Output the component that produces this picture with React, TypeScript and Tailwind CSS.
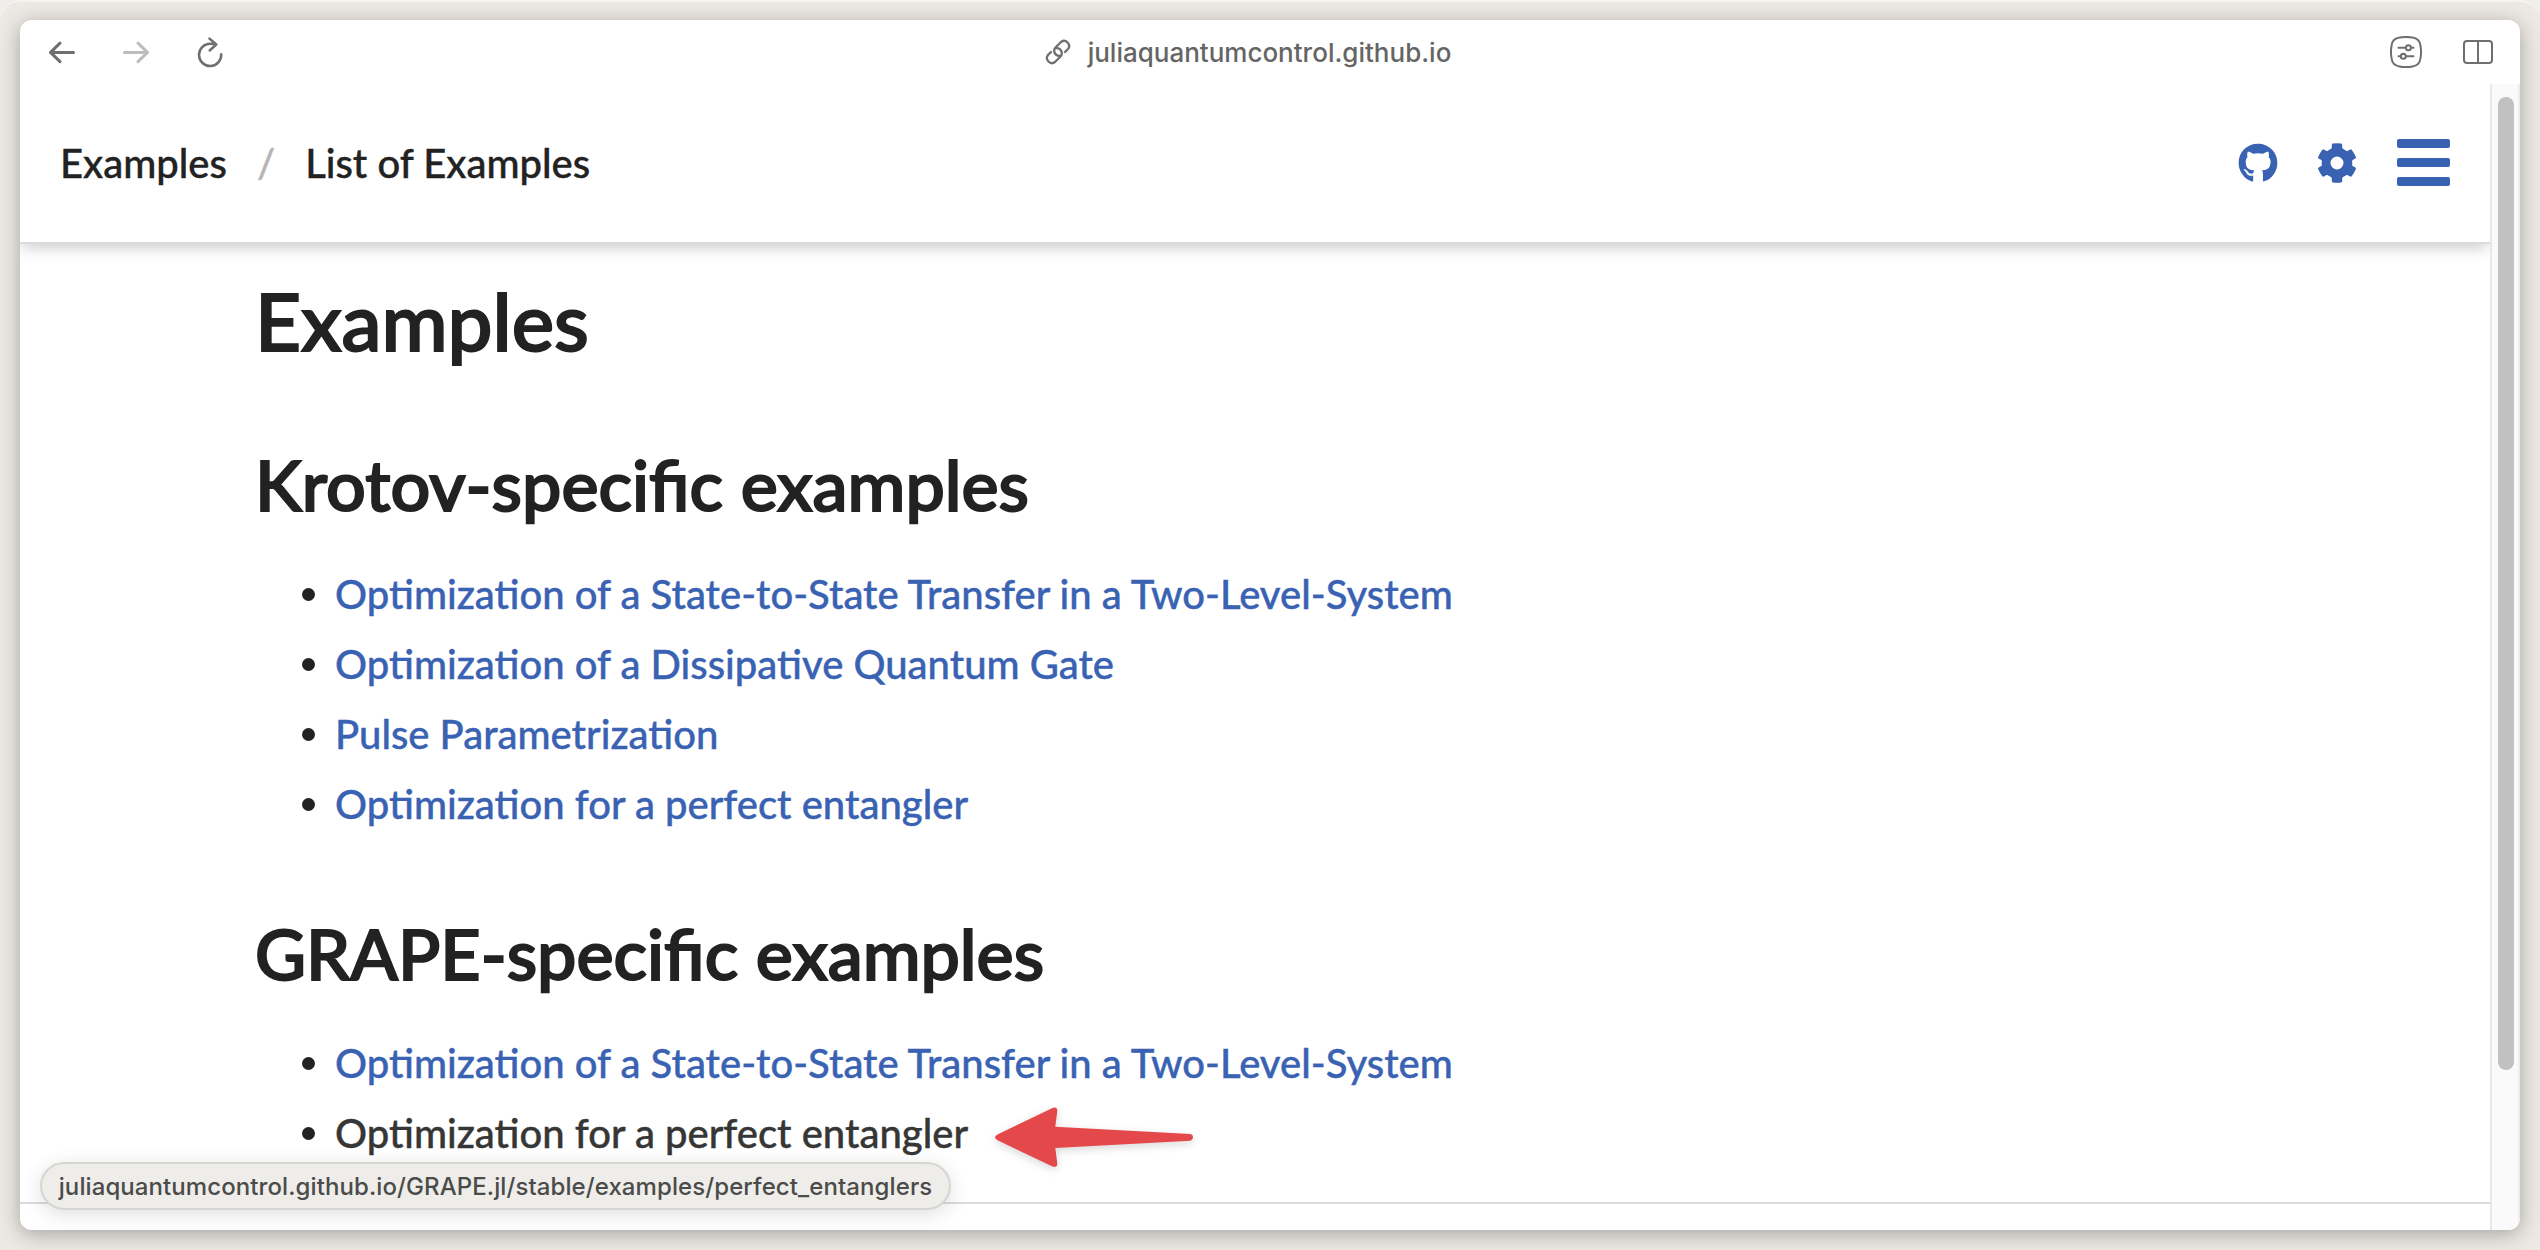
import React from "react";

type Section = { title: string; items: { label: string; hovered?: boolean }[] };

const sections: Section[] = [
  {
    title: "Krotov-specific examples",
    items: [
      { label: "Optimization of a State-to-State Transfer in a Two-Level-System" },
      { label: "Optimization of a Dissipative Quantum Gate" },
      { label: "Pulse Parametrization" },
      { label: "Optimization for a perfect entangler" },
    ],
  },
  {
    title: "GRAPE-specific examples",
    items: [
      { label: "Optimization of a State-to-State Transfer in a Two-Level-System" },
      { label: "Optimization for a perfect entangler", hovered: true },
    ],
  },
];

function BrowserBar() {
  return (
    <div className="flex h-16 shrink-0 items-center pl-7 pr-[27px] text-[#6f6f6f]">
      <div className="flex flex-1 items-center gap-[46px]">
        <svg width="28" height="28" viewBox="0 0 28 28" fill="none" stroke="currentColor" strokeWidth="3" strokeLinecap="round" strokeLinejoin="round">
          <path d="M25.500 14.400H2.500M12 5.200L2.500 14.400l9.500 9.200" />
        </svg>
        <svg className="text-[#bdbdbd]" width="28" height="28" viewBox="0 0 28 28" fill="none" stroke="currentColor" strokeWidth="3" strokeLinecap="round" strokeLinejoin="round">
          <path d="M2.500 14.400h23M16 5.200l9.500 9.200-9.500 9.200" />
        </svg>
        <svg width="28" height="32" viewBox="0 0 28 32" fill="none" stroke="currentColor" strokeWidth="2.500" strokeLinecap="round" strokeLinejoin="round">
          <path d="M25.200 18.200A11.100 11.100 0 1 1 14.100 7.800c2 0 3.800.1 5.400.5M13.500 2.600l6.800 5.900-6.600 6" />
        </svg>
      </div>
      <div className="mr-[46px] flex items-center gap-4">
        <svg width="28" height="28" viewBox="0 0 28 28" fill="none" stroke="currentColor" strokeWidth="2.300" strokeLinecap="round">
          <path d="M7 14L4 17A5 5 0 0 0 11 24L16.300 18.700A5 5 0 0 0 12.800 10.200" />
          <path d="M21 14L24 11A5 5 0 0 0 17 4L11.700 9.300A5 5 0 0 0 15.200 17.800" />
        </svg>
        <span className="pt-px font-['Inter'] text-[26px] font-medium leading-8 text-[#656565]">juliaquantumcontrol.github.io</span>
      </div>
      <div className="flex flex-1 items-center justify-end gap-[41px]">
        <svg width="32" height="32" viewBox="0 0 32 32" fill="none" stroke="currentColor" strokeWidth="2">
          <path d="M9.500 1.600C13 .9 19 .9 22.500 1.600 27.500 2.200 29.800 4.500 30.400 9.500 31.100 13 31.100 19 30.400 22.500 29.800 27.500 27.500 29.800 22.500 30.400 19 31.100 13 31.100 9.500 30.400 4.500 29.800 2.200 27.500 1.600 22.500.9 19 .9 13 1.600 9.500 2.200 4.500 4.500 2.200 9.500 1.600z" />
          <path d="M8.500 11.700h7M21 11.700h2.500M8.500 20.300h2M16 20.300h7.500" strokeLinecap="round" />
          <circle cx="18.400" cy="11.700" r="2.500" />
          <circle cx="13.300" cy="20.300" r="2.500" />
        </svg>
        <svg width="30" height="24" viewBox="0 0 30 24" fill="none" stroke="currentColor" strokeWidth="2">
          <rect x="1" y="1" width="28" height="22" rx="3" />
          <path d="M15 1v22" />
        </svg>
      </div>
    </div>
  );
}

function GearIcon() {
  return (
    <svg width="40" height="40" viewBox="-20 -20 40 40" fill="currentColor">
      <circle r="10.900" fill="none" stroke="currentColor" strokeWidth="8.800" />
      {[0, 60, 120, 180, 240, 300].map((a) => (
        <path key={a} transform={`rotate(${a})`} d="M-4.200-19.400Q0-19.900 4.200-19.400Q5.200-19.200 5.200-18.200L5.300-15L7-12H-7L-5.300-15L-5.200-18.200Q-5.200-19.200-4.200-19.400z" />
      ))}
    </svg>
  );
}

function PageHeader() {
  return (
    <header className="z-10 flex h-40 shrink-0 items-center justify-between border-b-2 border-[#dbdbdb] bg-white pl-10 pr-10 shadow-[0_6px_14px_-2px_rgba(0,0,0,0.2)]">
      <nav className="flex items-center text-[40px] font-medium leading-[60px] text-[#222222] [-webkit-text-stroke:0.4px]">
        <span>Examples</span>
        <span className="px-[30px] text-[#b5b5b5]">/</span>
        <span>List of Examples</span>
      </nav>
      <div className="flex items-center gap-10 pb-px text-[#3a62b3]">
        <svg className="-mr-px" width="40" height="40" viewBox="0 0 496 512" fill="currentColor">
          <path d="M165.900 397.400c0 2-2.300 3.600-5.200 3.600-3.300.3-5.600-1.300-5.600-3.600 0-2 2.300-3.600 5.200-3.600 3-.3 5.600 1.300 5.600 3.600zm-31.100-4.500c-.7 2 1.300 4.300 4.300 4.900 2.600 1 5.600 0 6.200-2s-1.300-4.300-4.300-5.200c-2.600-.7-5.500.3-6.200 2.300zm44.200-1.700c-2.900.7-4.900 2.600-4.600 4.900.3 2 2.900 3.300 5.900 2.600 2.900-.7 4.900-2.600 4.600-4.600-.3-1.900-3-3.200-5.900-2.900zM244.800 8C106.100 8 0 113.300 0 252c0 110.900 69.800 205.800 169.500 239.200 12.800 2.300 17.300-5.600 17.300-12.100 0-6.200-.3-40.400-.3-61.400 0 0-70 15-84.700-29.800 0 0-11.400-29.100-27.800-36.600 0 0-22.900-15.700 1.600-15.400 0 0 24.900 2 38.600 25.800 21.900 38.600 58.600 27.500 72.900 20.900 2.300-16 8.800-27.100 16-33.700-55.900-6.200-112.300-14.300-112.300-110.500 0-27.500 7.600-41.300 23.600-58.900-2.600-6.500-11.100-33.300 2.600-67.900 20.900-6.500 69 27 69 27 20-5.600 41.500-8.500 62.800-8.500s42.800 2.900 62.800 8.500c0 0 48.100-33.600 69-27 13.700 34.700 5.200 61.400 2.600 67.900 16 17.700 25.800 31.500 25.800 58.900 0 96.500-58.900 104.200-114.800 110.500 9.200 7.900 17 22.900 17 46.400 0 33.700-.3 75.400-.3 83.600 0 6.500 4.600 14.400 17.300 12.100C428.200 457.800 496 362.900 496 252 496 113.300 383.500 8 244.800 8z" />
        </svg>
        <GearIcon />
        <div className="flex w-[53px] flex-col gap-[10px]">
          <div className="h-[9px] rounded-[2px] bg-[#3a62b3]" />
          <div className="h-[9px] rounded-[2px] bg-[#3a62b3]" />
          <div className="h-[9px] rounded-[2px] bg-[#3a62b3]" />
        </div>
      </div>
    </header>
  );
}

function RedArrow() {
  return (
    <svg className="absolute left-[calc(100%+27px)] top-1 overflow-visible drop-shadow-[0_3px_4px_rgba(0,0,0,0.15)]" width="198" height="61" viewBox="0 0 198 61">
      <path d="M2.500 27.500L57.500.9Q62.500-.5 62.300 4L60.300 19.700L195.500 27Q198 27.500 198 30.300Q198 33 195.500 33.800L60.300 41L62.300 56.500Q62.500 61 57.500 59.500L2.500 33.300Q-2.500 30.300 2.500 27.500z" fill="#e5484a" />
    </svg>
  );
}

export default function App() {
  return (
    <div className="h-[1250px] w-[2540px] overflow-hidden bg-[#f0eeea]">
      <div className="h-full rounded-t-[20px] bg-[#ece9e4] p-5 font-['Lato',sans-serif] shadow-[inset_0_2px_0_#f5f3f1]">
        <div className="relative h-full rounded-xl shadow-[0_4px_20px_rgba(0,0,0,0.3)]">
          <div className="flex h-full flex-col overflow-hidden rounded-xl bg-white">
            <BrowserBar />
            <div className="flex min-h-0 flex-1">
              <div className="flex min-w-0 flex-1 flex-col overflow-hidden">
                <PageHeader />
                <main className="h-[960px] shrink-0 border-b-2 border-[#dbdbdb] pl-[235px] text-[40px] font-medium leading-[60px] text-[#222222]">
                  <h1 className="pb-px pt-8 text-[80px] font-medium leading-[88px] [-webkit-text-stroke:2px]">Examples</h1>
                  {sections.map((s) => (
                    <section key={s.title} className="pt-[74px]">
                      <h2 className="text-[70px] font-medium leading-[90px] [-webkit-text-stroke:2px]">{s.title}</h2>
                      <ul className="flex flex-col gap-[10px] pt-[35px]">
                        {s.items.map((item) => (
                          <li key={item.label} className="flex items-center pl-[47px] [-webkit-text-stroke:0.4px]">
                            <span className="mr-5 h-[13px] w-[13px] rounded-full bg-[#222222]" />
                            <span className={item.hovered ? "relative text-[#363636]" : "text-[#3a62b3]"}>
                              {item.label}
                              {item.hovered && <RedArrow />}
                            </span>
                          </li>
                        ))}
                      </ul>
                    </section>
                  ))}
                </main>
              </div>
              <div className="w-[30px] border-l-2 border-r-2 border-l-[#e8e8e8] border-r-[#ededed] bg-[#fafafa] pl-1.5 pt-[13px]">
                <div className="h-[973px] w-4 rounded-full bg-[#c1c1c1]" />
              </div>
            </div>
          </div>
          <div className="absolute bottom-[20px] left-5 flex h-12 w-[911px] items-center justify-center rounded-full border-2 border-[#d5d5d1] bg-[#eeede9] pt-px font-['Inter'] text-[24px] font-medium tracking-[0.09px] text-[#4b4b49] shadow-[0_4px_20px_rgba(0,0,0,0.13)]">
            juliaquantumcontrol.github.io/GRAPE.jl/stable/examples/perfect_entanglers
          </div>
        </div>
      </div>
    </div>
  );
}
